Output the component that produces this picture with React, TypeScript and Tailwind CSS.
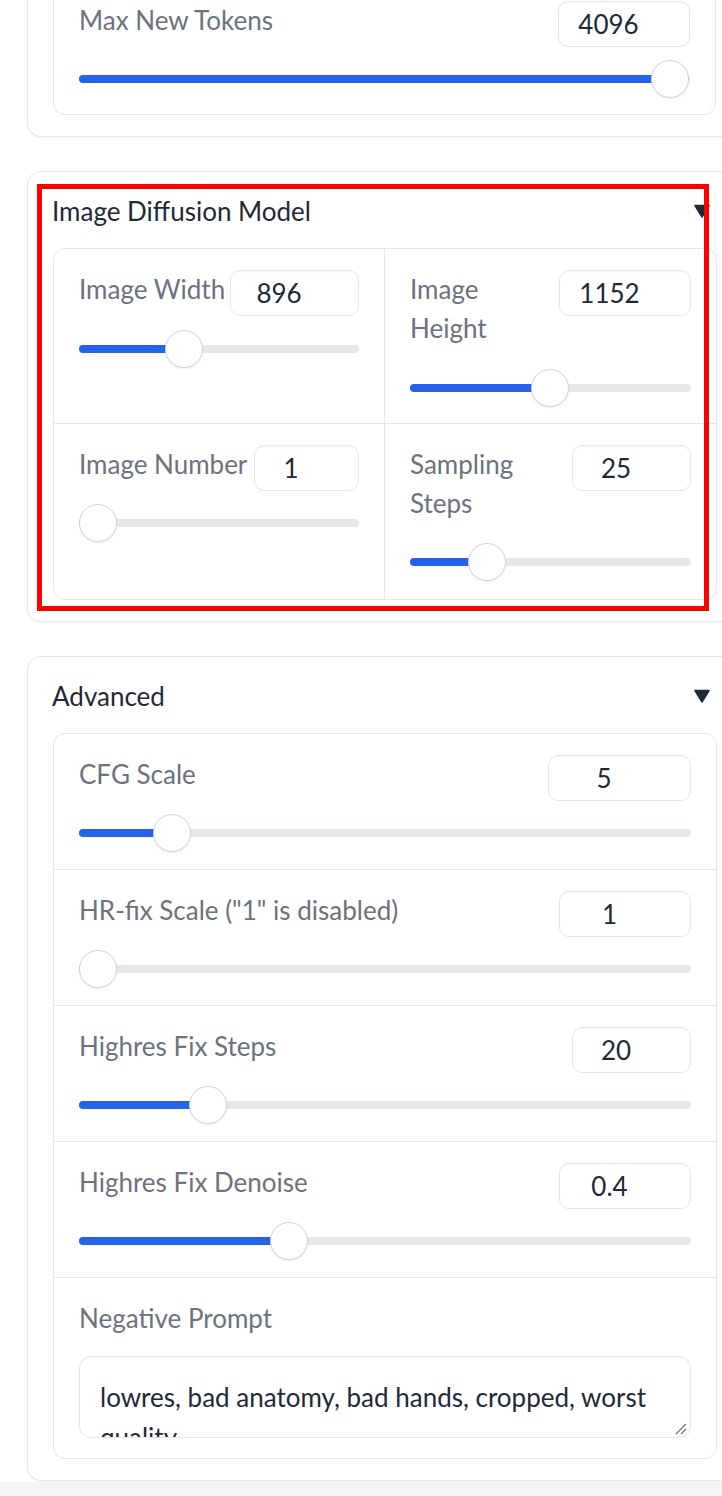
import type { ReactNode } from "react";

type SliderProps = {
  at: number;
};

function Slider({ at }: SliderProps) {
  return (
    <div className="relative h-[38px] w-full">
      <div className="absolute left-0 right-0 top-[15px] h-[8px] rounded-full bg-[#e5e7eb]" />
      <div
        className="absolute left-0 top-[15px] h-[8px] rounded-full bg-[#2563eb]"
        style={{ width: at }}
      />
      <div
        className="absolute top-0 h-[38px] w-[38px] rounded-full border border-[#d4d4d8] bg-white shadow-[0_1px_2px_rgba(0,0,0,0.08)]"
        style={{ left: at - 19 }}
      />
    </div>
  );
}

type NumBoxProps = {
  value: string;
  width: number;
};

function NumBox({ value, width }: NumBoxProps) {
  return (
    <div
      className="h-[46px] shrink-0 rounded-[10px] border border-[#e5e7eb] bg-white pr-[31px] text-center text-[26px] leading-[44px] text-[#1f2937] shadow-[inset_0_1px_2px_rgba(0,0,0,0.04)]"
      style={{ width }}
    >
      {value}
    </div>
  );
}

type FieldProps = {
  label: ReactNode;
  value: string;
  box: number;
  at: number;
  gap: number;
};

function Field({ label, value, box, at, gap }: FieldProps) {
  return (
    <div>
      <div className="flex items-start justify-between">
        <span className="text-[26px] leading-[39px] text-[#6b7280] whitespace-nowrap">{label}</span>
        <NumBox value={value} width={box} />
      </div>
      <div style={{ marginTop: gap }}>
        <Slider at={at} />
      </div>
    </div>
  );
}

function Caret() {
  return (
    <svg width="16" height="14" viewBox="0 0 16 14" className="mr-[7px]">
      <path d="M1 1.5 L15 1.5 L8 13 Z" fill="#1f2937" stroke="#1f2937" strokeWidth="1.5" strokeLinejoin="round" />
    </svg>
  );
}

function CardHeader({ title }: { title: string }) {
  return (
    <div className="flex items-center justify-between">
      <span className="text-[26px] leading-[38px] text-[#1f2937]">{title}</span>
      <Caret />
    </div>
  );
}

const advanced = [
  { label: "CFG Scale", value: "5", box: 143, at: 93 },
  { label: 'HR-fix Scale ("1" is disabled)', value: "1", box: 132, at: 19 },
  { label: "Highres Fix Steps", value: "20", box: 119, at: 129 },
  { label: "Highres Fix Denoise", value: "0.4", box: 132, at: 210 },
];

export default function App() {
  return (
    <div
      className="relative flex h-[1496px] w-[722px] flex-col overflow-hidden bg-white"
      style={{ fontFamily: "Lato, 'Noto Sans', sans-serif" }}
    >
      {/* LLM settings card (cut off at top) */}
      <div className="ml-[27px] mt-[-42px] w-[715px] shrink-0 rounded-[14px] border border-[#e5e7eb] bg-white px-[25px] pb-[21px] pt-[20px] shadow-[0_1px_3px_rgba(0,0,0,0.05)]">
        <div className="rounded-[12px] border border-[#e5e7eb] px-[25px] pb-[16px] pt-[21px]">
          <Field label="Max New Tokens" value="4096" box={132} at={591} gap={13} />
        </div>
      </div>

      {/* Image Diffusion Model */}
      <div className="ml-[27px] mt-[34px] w-[715px] shrink-0 rounded-[14px] border border-[#e5e7eb] bg-white px-[24px] pb-[21px] pt-[20px] shadow-[0_1px_3px_rgba(0,0,0,0.05)]">
        <CardHeader title="Image Diffusion Model" />
        <div className="mt-[18px] ml-[1px] grid grid-cols-2 rounded-[12px] border border-[#e5e7eb]">
          <div className="border-b border-r border-[#e5e7eb] px-[25px] pb-[16px] pt-[21px]">
            <Field label="Image Width" value="896" box={129} at={105} gap={14} />
          </div>
          <div className="border-b border-[#e5e7eb] px-[25px] pb-[16px] pt-[21px]">
            <Field
              label={
                <>
                  Image
                  <br />
                  Height
                </>
              }
              value="1152"
              box={132}
              at={140}
              gap={21}
            />
          </div>
          <div className="border-r border-[#e5e7eb] px-[25px] pb-[18px] pt-[21px]">
            <Field label="Image Number" value="1" box={105} at={19} gap={13} />
          </div>
          <div className="px-[25px] pb-[18px] pt-[21px]">
            <Field
              label={
                <>
                  Sampling
                  <br />
                  Steps
                </>
              }
              value="25"
              box={119}
              at={77}
              gap={20}
            />
          </div>
        </div>
      </div>

      {/* Advanced */}
      <div className="ml-[27px] mt-[34px] w-[715px] shrink-0 rounded-[14px] border border-[#e5e7eb] bg-white px-[24px] pb-[21px] pt-[20px] shadow-[0_1px_3px_rgba(0,0,0,0.05)]">
        <CardHeader title="Advanced" />
        <div className="mt-[18px] ml-[1px] rounded-[12px] border border-[#e5e7eb]">
          {advanced.map((row) => (
            <div key={row.label} className="border-b border-[#e5e7eb] px-[25px] pb-[17px] pt-[21px]">
              <Field label={row.label} value={row.value} box={row.box} at={row.at} gap={13} />
            </div>
          ))}
          <div className="px-[25px] pb-[20px] pt-[21px]">
            <div className="text-[26px] leading-[39px] text-[#6b7280]">Negative Prompt</div>
            <div className="relative mt-[18px] h-[82px] overflow-hidden rounded-[12px] border border-[#e5e7eb] bg-white pl-[20px] pt-[20px] text-[26px] leading-[40px] text-[#1f2937] shadow-[inset_0_1px_2px_rgba(0,0,0,0.04)]">
              <div className="whitespace-nowrap">lowres, bad anatomy, bad hands, cropped, worst</div>
              <div>quality</div>
              <svg width="12" height="12" viewBox="0 0 12 12" className="absolute bottom-[2px] right-[3px]">
                <path d="M11 1 L1 11 M11 6 L6 11" stroke="#6b7280" strokeWidth="1.2" />
              </svg>
            </div>
          </div>
        </div>
      </div>

      <div className="mt-[1px] flex-1 bg-[#f4f4f5]" />

      {/* red highlight annotation */}
      <div className="pointer-events-none absolute left-[37px] top-[184px] h-[427px] w-[672px] border-[5px] border-[#ff0000]" />
    </div>
  );
}
